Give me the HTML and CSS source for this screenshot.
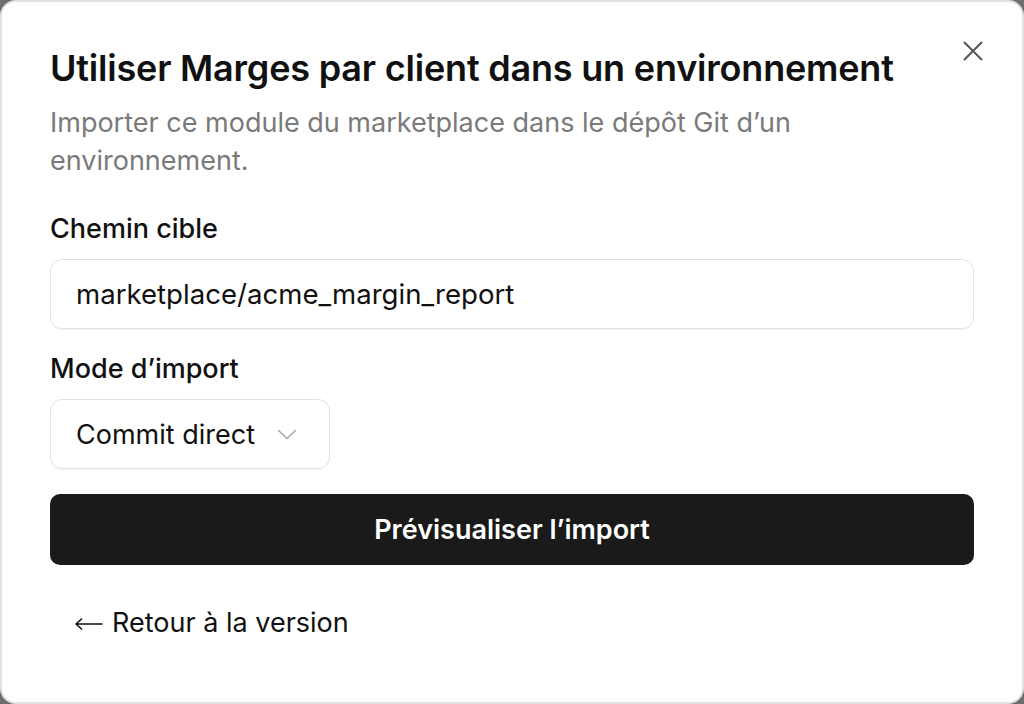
FILE: index.html
```html
<!DOCTYPE html>
<html lang="fr">
<head>
<meta charset="utf-8">
<title>Utiliser Marges par client</title>
<link rel="stylesheet" href="styles.css">
</head>
<body>
<div class="dialog">
  <button class="close" aria-label="Fermer">
    <svg width="20" height="20" viewBox="0 0 20 20" fill="none" stroke="currentColor" stroke-width="2" stroke-linecap="round"><path d="M1.5 1.5L18.5 18.5M18.5 1.5L1.5 18.5"/></svg>
  </button>
  <h1 class="title">Utiliser Marges par client dans un environnement</h1>
  <p class="subtitle">Importer ce module du marketplace dans le dépôt Git d’un environnement.</p>
  <div class="field">
    <label class="label">Chemin cible</label>
    <div class="input">marketplace/acme_margin_report</div>
  </div>
  <div class="field">
    <label class="label">Mode d’import</label>
    <div class="select">
      <span>Commit direct</span>
      <svg class="chev" width="20" height="11" viewBox="0 0 20 11" fill="none" stroke="currentColor" stroke-width="1.6" stroke-linecap="round" stroke-linejoin="round"><path d="M1.5 1.5L10 9.5L18.5 1.5"/></svg>
    </div>
  </div>
  <button class="primary">Prévisualiser l’import</button>
  <button class="back"><svg class="arrow" width="28" height="12" viewBox="0 0 28 12" fill="none" stroke="currentColor" stroke-width="1.6" stroke-linecap="round" stroke-linejoin="round"><path d="M1 6H27M1 6L6.5 1M1 6L6.5 11"/></svg><span>Retour à la version</span></button>
</div>
</body>
</html>
```

FILE: styles.css
```css
* { box-sizing: border-box; }
html, body { margin: 0; padding: 0; }
body {
  background: #6e6e6e;
  font-family: "Inter", "Liberation Sans", sans-serif;
  color: #111;
}
.dialog {
  position: relative;
  width: 1024px;
  height: 704px;
  background: #fff;
  border: 2px solid #e3e3e3;
  border-radius: 16px;
  padding: 44px 48px;
  display: flex;
  flex-direction: column;
}
.close {
  position: absolute;
  top: 39px;
  right: 39px;
  background: none;
  border: 0;
  padding: 0;
  color: #555;
  width: 20px;
  height: 20px;
  display: flex;
}
.title {
  margin: 0;
  font-size: 36px;
  line-height: 44px;
  font-weight: 600;
  letter-spacing: -0.2px;
  color: #111;
}
.subtitle {
  margin: 14px 0 0;
  font-size: 27px;
  line-height: 38px;
  color: #7a7a7a;
  max-width: 800px;
}
.field {
  display: flex;
  flex-direction: column;
  gap: 14px;
  margin-top: 33px;
}
.field + .field { margin-top: 24px; }
.label {
  font-size: 27px;
  line-height: 32px;
  font-weight: 500;
  color: #111;
}
.input, .select {
  height: 70px;
  border: 1.5px solid #e2e2e2;
  border-radius: 12px;
  font-size: 27px;
  color: #111;
  display: flex;
  align-items: center;
  padding: 0 25px;
  box-shadow: 0 1px 2px rgba(0,0,0,0.05);
}
.input { font-size: 27.6px; }
.select {
  width: 280px;
  gap: 22px;
}
.chev { color: #aaa; flex: none; }
.primary {
  margin-top: 25px;
  height: 71px;
  background: #1a1a1a;
  color: #fff;
  border: 0;
  border-radius: 10px;
  font-family: inherit;
  font-size: 27px;
  font-weight: 600;
}
.back {
  margin-top: 24px;
  align-self: flex-start;
  height: 66px;
  padding: 0 0 0 25px;
  background: none;
  border: 0;
  font-family: inherit;
  font-size: 27px;
  color: #111;
  display: flex;
  align-items: center;
  gap: 9px;
}
.arrow { flex: none; margin-top: 4px; }
```
